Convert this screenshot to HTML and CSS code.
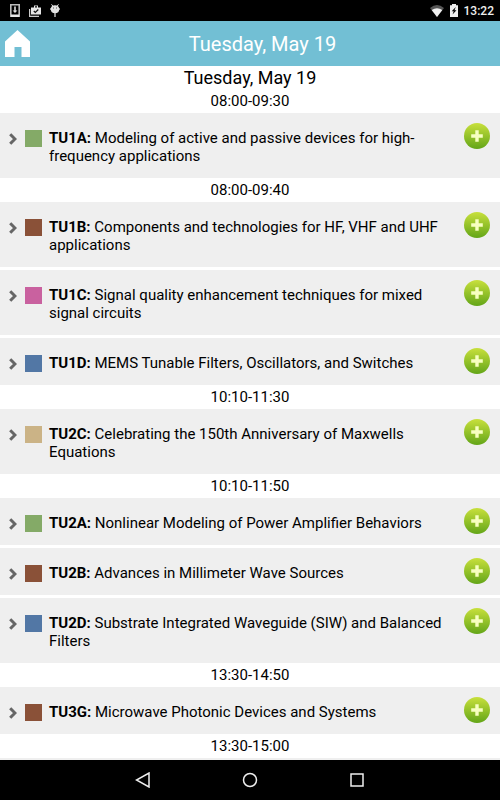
FILE: index.html
```
<!DOCTYPE html>
<html lang="en">
<head>
  <meta charset="UTF-8">
  <meta name="viewport" content="width=device-width, initial-scale=1.0">
  <title>Tuesday, May 19</title>
  <link rel="stylesheet" href="styles.css">
</head>
<body>
  <!-- shared icons -->
  <svg class="defs" aria-hidden="true">
    <defs>
      <linearGradient id="green" x1="0" y1="0" x2="0" y2="1">
        <stop offset="0" stop-color="#c8e03c"/>
        <stop offset="1" stop-color="#63a518"/>
      </linearGradient>
      <symbol id="chevron" viewBox="0 0 8 12">
        <path d="M1.2 1.2 6 6 1.2 10.8" fill="none" stroke="#666" stroke-width="3"/>
      </symbol>
      <symbol id="plus" viewBox="0 0 26 26">
        <circle cx="13" cy="13" r="13" fill="url(#green)"/>
        <path d="M11.3 7.2h3.4v4.1h4.1v3.4h-4.1v4.1h-3.4v-4.1H7.2v-3.4h4.1z" fill="#f7ffc0"/>
      </symbol>
    </defs>
  </svg>

  <div class="status">
    <svg width="10" height="13" viewBox="0 0 10 13"><path d="M.8.8h8.4v11.4H.8z" fill="none" stroke="#bbb" stroke-width="1.6"/><path d="M1 10.5h8V13H1z" fill="#e8e8e8"/><path d="M4.2 2.5h1.6v4h1.6L5 9 2.6 6.5h1.6z" fill="#ddd"/></svg>
    <svg width="12" height="12" viewBox="0 0 12 12"><path d="M.6 4v7.4H10" fill="none" stroke="#ccc" stroke-width="1.2"/><path d="M2 2.5h3V.5h4v2h3v7H2z" fill="#e6e6e6"/><path d="M6 1.3h2v1.2H6z" fill="#000"/><path d="m4.8 6 1.5 1.5 3-3" fill="none" stroke="#111" stroke-width="1.2"/></svg>
    <svg width="10" height="13" viewBox="0 0 10 13"><path d="m1.5.3 1.5 2M8.5.3 7 2.3" stroke="#ddd"/><ellipse cx="5" cy="5.3" rx="4.2" ry="4" fill="#e2e2e2"/><path d="M0 5h1M9 5h1M5 9v4" stroke="#bbb" stroke-width="1.5"/><path d="M3 3.5h1v1H3zM6 3.5h1v1H6z" fill="#555"/></svg>
    <svg class="wifi" width="14" height="12" viewBox="0 0 14 12"><path d="M0 3Q7-3 14 3L7 12z" fill="#555"/><path d="M1.7 5Q7 1.300 12.300 5L7 12z" fill="#f0f0f0"/></svg>
    <svg width="8" height="13" viewBox="0 0 8 13"><path d="M0 1.2h2V0h4v1.2h2V13H0z" fill="#eee"/><path d="M5.8 3 1.7 7.3h2l-1.200 3.200 4-4.300h-2z" fill="#000"/></svg>
    <span class="clock">13:22</span>
  </div>

  <header class="header">
    <a class="home" href="#" aria-label="Home">
      <svg width="25" height="27" viewBox="0 0 25 27"><path d="M12.5 0 25 11.500V27h-8.500V17h-7v10H0V11.500z" fill="#fff"/></svg>
    </a>
    <h1>Tuesday, May 19</h1>
  </header>

  <main class="program">
    <h2>Tuesday, May 19</h2>

    <h3>08:00-09:30</h3>
    <ul>
      <li><svg class="chevron"><use href="#chevron"/></svg><span class="swatch green"></span><a href="#"><b>TU1A:</b> Modeling of active and passive devices for high-frequency applications</a><button aria-label="Add TU1A"><svg><use href="#plus"/></svg></button></li>
    </ul>

    <h3>08:00-09:40</h3>
    <ul>
      <li><svg class="chevron"><use href="#chevron"/></svg><span class="swatch brown"></span><a href="#"><b>TU1B:</b> Components and technologies for HF, VHF and UHF applications</a><button aria-label="Add TU1B"><svg><use href="#plus"/></svg></button></li>
      <li><svg class="chevron"><use href="#chevron"/></svg><span class="swatch pink"></span><a href="#"><b>TU1C:</b> Signal quality enhancement techniques for mixed signal circuits</a><button aria-label="Add TU1C"><svg><use href="#plus"/></svg></button></li>
      <li><svg class="chevron"><use href="#chevron"/></svg><span class="swatch blue"></span><a href="#"><b>TU1D:</b> MEMS Tunable Filters, Oscillators, and Switches</a><button aria-label="Add TU1D"><svg><use href="#plus"/></svg></button></li>
    </ul>

    <h3>10:10-11:30</h3>
    <ul>
      <li><svg class="chevron"><use href="#chevron"/></svg><span class="swatch tan"></span><a href="#"><b>TU2C:</b> Celebrating the 150th Anniversary of Maxwells Equations</a><button aria-label="Add TU2C"><svg><use href="#plus"/></svg></button></li>
    </ul>

    <h3>10:10-11:50</h3>
    <ul>
      <li><svg class="chevron"><use href="#chevron"/></svg><span class="swatch green"></span><a href="#"><b>TU2A:</b> Nonlinear Modeling of Power Amplifier Behaviors</a><button aria-label="Add TU2A"><svg><use href="#plus"/></svg></button></li>
      <li><svg class="chevron"><use href="#chevron"/></svg><span class="swatch brown"></span><a href="#"><b>TU2B:</b> Advances in Millimeter Wave Sources</a><button aria-label="Add TU2B"><svg><use href="#plus"/></svg></button></li>
      <li><svg class="chevron"><use href="#chevron"/></svg><span class="swatch blue"></span><a href="#"><b>TU2D:</b> Substrate Integrated Waveguide (SIW) and Balanced Filters</a><button aria-label="Add TU2D"><svg><use href="#plus"/></svg></button></li>
    </ul>

    <h3>13:30-14:50</h3>
    <ul>
      <li><svg class="chevron"><use href="#chevron"/></svg><span class="swatch brown"></span><a href="#"><b>TU3G:</b> Microwave Photonic Devices and Systems</a><button aria-label="Add TU3G"><svg><use href="#plus"/></svg></button></li>
    </ul>

    <h3>13:30-15:00</h3>
    <ul>
      <li><svg class="chevron"><use href="#chevron"/></svg></li>
    </ul>
  </main>

  <nav class="navbar">
    <button aria-label="Back"><svg width="16" height="16" viewBox="0 0 16 16"><path d="M14 1v14L1.500 8z"/></svg></button>
    <button aria-label="Home screen"><svg width="16" height="16" viewBox="0 0 16 16"><circle cx="8" cy="8" r="6.500"/></svg></button>
    <button aria-label="Recent apps"><svg width="16" height="16" viewBox="0 0 16 16"><path d="M2 2h12v12H2z"/></svg></button>
  </nav>
</body>
</html>
```
FILE: styles.css
```
* {
  padding: 0;
  margin: 0;
  box-sizing: border-box;
}
body {
  display: flex;
  flex-direction: column;
  height: 100vh;
  font-family: Roboto, sans-serif;
  font-size: 15px;
  line-height: 18px;
  color: #000;
  background-color: #fff;
}
svg {
  display: block;
}
button {
  border: 0;
  background: none;
  cursor: pointer;
}
.defs {
  position: absolute;
  width: 0;
  height: 0;
}

/* status bar */
.status {
  display: flex;
  flex: none;
  align-items: center;
  height: 21px;
  padding: 0 6px 0 10px;
  background-color: #000;
}
.status svg {
  flex: none;
  margin-right: 9px;
}
.status .wifi {
  margin-left: auto;
  margin-right: 6px;
}
.status .wifi + svg {
  margin-right: 6px;
}
.clock {
  color: #eee;
  font-size: 12px;
  font-weight: 500;
}

/* title bar */
.header {
  display: flex;
  flex: none;
  align-items: center;
  height: 45px;
  padding: 0 5px;
  background-color: #72bfd4;
  color: #fff;
}
.home {
  width: 25px;
}
.header h1 {
  flex: 1;
  font-size: 20px;
  font-weight: 400;
  text-align: center;
}

/* session list */
.program {
  flex: 1;
  min-height: 0;
  overflow: hidden;
}
.program h2 {
  padding-top: 1px;
  font-size: 18px;
  font-weight: 400;
  line-height: 22px;
  text-align: center;
}
.program h3 {
  font-size: 15px;
  font-weight: 400;
  line-height: 24px;
  text-align: center;
}
ul {
  display: grid;
  gap: 3px;
  list-style: none;
}
li {
  display: flex;
  align-items: flex-start;
  padding: 0 10px 0 9px;
  background-color: #efefef;
}
.chevron {
  flex: none;
  width: 8px;
  height: 12px;
  margin: 20px 8px 0 0;
}
.swatch {
  flex: none;
  width: 17px;
  height: 17px;
  margin: 17px 7px 0 0;
}
.green {
  background-color: #84aa67;
}
.brown {
  background-color: #8a5138;
}
.pink {
  background-color: #c9619f;
}
.blue {
  background-color: #5277a5;
}
.tan {
  background-color: #cbb386;
}
li a {
  flex: 1;
  padding: 16px 16px 13px 0;
  color: #000;
  text-decoration: none;
}
li button {
  flex: none;
  margin-top: 10px;
}
li button svg {
  width: 26px;
  height: 26px;
}

/* bottom navigation */
.navbar {
  display: flex;
  flex: none;
  justify-content: center;
  align-items: center;
  gap: 91px;
  height: 40px;
  background-color: #000;
}
.navbar svg {
  fill: none;
  stroke: #eee;
  stroke-width: 1.5;
}
```
